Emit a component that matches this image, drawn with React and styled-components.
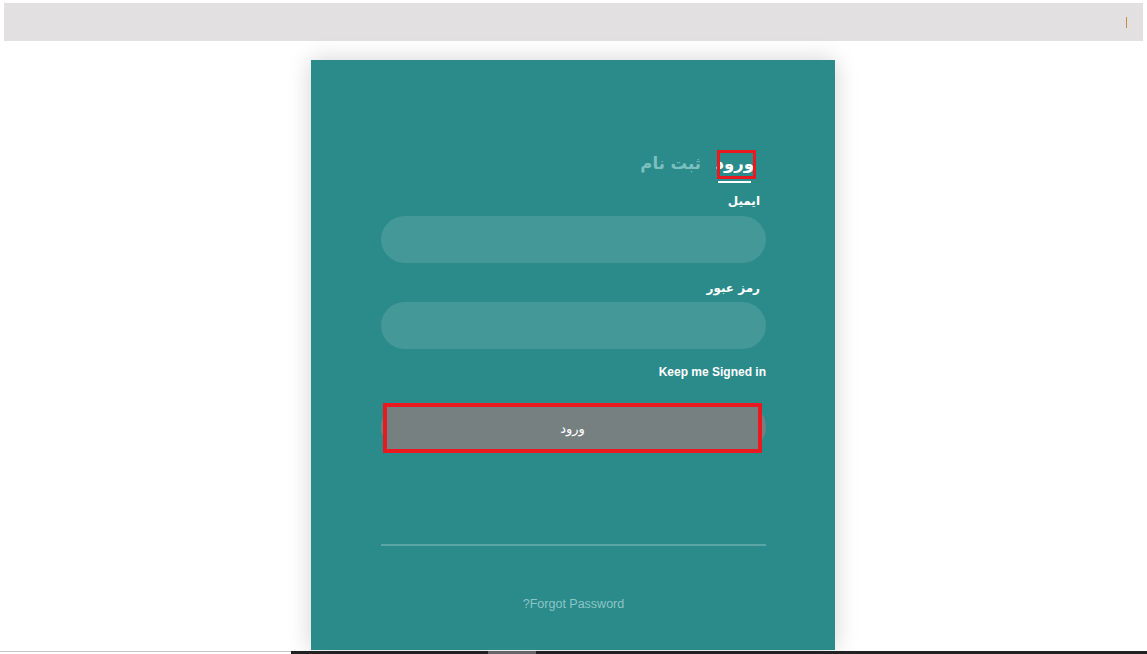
import React from 'react'
import styled, { createGlobalStyle } from 'styled-components'

const GlobalStyle = createGlobalStyle`
    html, body {
        margin: 0;
        padding: 0;
        background: #ffffff;
        overflow: hidden;
    }
    * {
        box-sizing: border-box;
    }
`

const Page = styled.div`
    height: 654px;
    padding-top: 3px;
    display: flex;
    flex-direction: column;
    font-family: "Liberation Sans", "DejaVu Sans", sans-serif;
`

const TopBar = styled.div`
    height: 38px;
    margin: 0 4px;
    background-color: #e2e0e1;
    display: flex;
    align-items: center;
    justify-content: flex-end;
    padding-right: 16px;
`

const Caret = styled.span`
    width: 1px;
    height: 11px;
    background-color: #c98a3a;
`

const Card = styled.div`
    width: 524px;
    height: 590px;
    margin: 19px 0 0 311px;
    padding: 90px 69px 0 70px;
    background-color: #2b8a8a;
    box-shadow: 0 0 22px rgba(0, 0, 0, 0.18);
    direction: rtl;
    display: flex;
    flex-direction: column;
`

const Tabs = styled.div`
    height: 33px;
    display: flex;
    align-items: flex-start;
    gap: 14px;
    padding-right: 10px;
`

const Tab = styled.div`
    position: relative;
    height: 29px;
    padding: 0 2px;
    white-space: nowrap;
    font-family: "DejaVu Sans", sans-serif;
    font-weight: bold;
    font-size: 16.5px;
    line-height: 28px;
    color: ${p => (p.$active ? '#ffffff' : '#7cbfbf')};

    ${p => p.$active && `
        width: 39px;
        &::before {
            content: "";
            position: absolute;
            inset: 0;
            border: 3px solid #e8191f;
        }
        &::after {
            content: "";
            position: absolute;
            right: 5px;
            bottom: -4px;
            width: 33px;
            height: 2px;
            background-color: #ffffff;
        }
    `}
`

const Label = styled.label`
    display: block;
    margin-top: ${p => p.$top || 10}px;
    padding-right: 6px;
    font-family: "DejaVu Sans", sans-serif;
    font-weight: bold;
    font-size: 12px;
    line-height: 16px;
    color: #ffffff;
`

const Input = styled.input`
    display: block;
    width: 100%;
    height: 47px;
    margin-top: ${p => p.$top || 7}px;
    border: none;
    outline: none;
    border-radius: 24px;
    background-color: rgba(255, 255, 255, 0.12);
    padding: 0 20px;
    color: #ffffff;
    font-size: 14px;
`

const KeepSigned = styled.div`
    margin-top: 16px;
    font-weight: bold;
    font-size: 12px;
    line-height: 14px;
    color: #ffffff;
`

const ButtonTrack = styled.div`
    margin-top: 24px;
    height: 48px;
    border-radius: 24px;
    background-color: #778080;
    display: flex;
    padding: 0 4px 0 2px;
`

const SubmitButton = styled.button`
    flex: 1;
    height: 50px;
    margin-bottom: -2px;
    border: 4px solid #e8191f;
    background-color: #778080;
    color: #ffffff;
    font-family: "DejaVu Sans", sans-serif;
    font-size: 13px;
    cursor: pointer;
`

const Divider = styled.hr`
    margin: 93px 0 0;
    height: 2px;
    border: none;
    background-color: #5aa6a6;
`

const Forgot = styled.a`
    display: block;
    margin-top: 51px;
    text-align: center;
    font-size: 12.5px;
    line-height: 14px;
    color: #8cc6c6;
    text-decoration: none;
`

const BottomStrip = styled.div`
    margin-top: 1px;
    height: 3px;
    display: flex;
`

const StripSegment = styled.div`
    width: ${p => (p.$width ? `${p.$width}px` : 'auto')};
    flex: ${p => (p.$width ? 'none' : 1)};
    background-color: ${p => p.$color};
    border-top: ${p => (p.$line ? '1px solid #c4c4c4' : 'none')};
`

const App = () => {
    return (
        <Page>
            <GlobalStyle />
            <TopBar>
                <Caret />
            </TopBar>
            <Card>
                <Tabs>
                    <Tab $active>ورود</Tab>
                    <Tab>ثبت نام</Tab>
                </Tabs>
                <Label>ایمیل</Label>
                <Input type="email" />
                <Label $top={17}>رمز عبور</Label>
                <Input type="password" $top={6} />
                <KeepSigned>Keep me Signed in</KeepSigned>
                <ButtonTrack>
                    <SubmitButton>ورود</SubmitButton>
                </ButtonTrack>
                <Divider />
                <Forgot href="#">Forgot Password?</Forgot>
            </Card>
            <BottomStrip>
                <StripSegment $width={291} $color="#ffffff" $line />
                <StripSegment $width={197} $color="#222222" />
                <StripSegment $width={48} $color="#666666" />
                <StripSegment $color="#222222" />
            </BottomStrip>
        </Page>
    )
}

export default App
